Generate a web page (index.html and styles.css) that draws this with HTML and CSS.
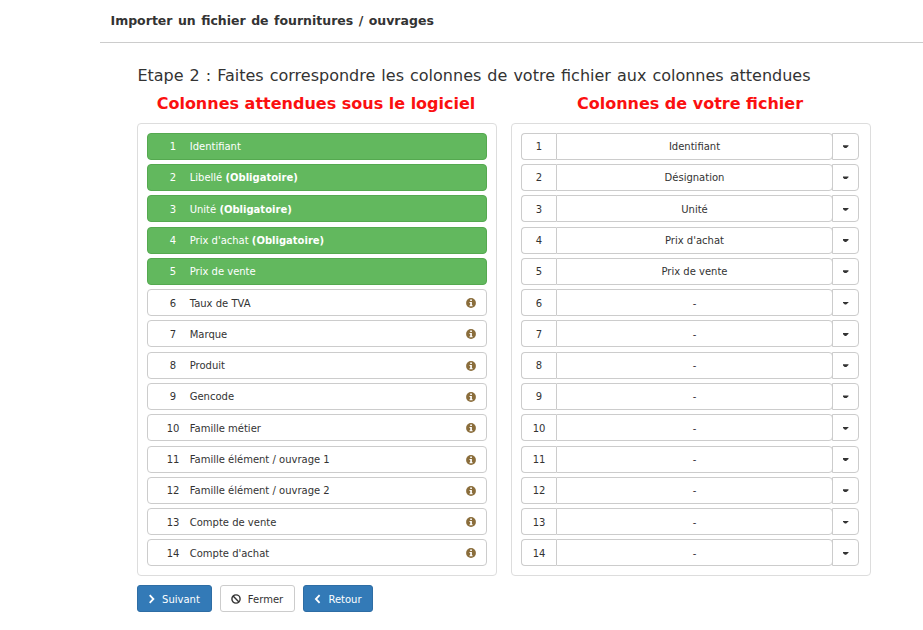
FILE: index.html
```
<!DOCTYPE html>
<html lang="fr">
<head>
<meta charset="utf-8">
<title>Importer un fichier</title>
<link rel="stylesheet" href="styles.css">
</head>
<body>
<svg class="defs"><defs>
<symbol id="info" viewBox="0 0 10 10"><circle cx="5" cy="5" r="4.9" fill="#8a6d3b"/><path d="M4.2 1.6h1.7v1.4H4.2zM3.5 4h2.4v3.2h.7v1H3.5v-1h.7V5h-.7z" fill="#fff"/></symbol>
</defs></svg>
<main class="page">
<header class="page-header"><h1>Importer un fichier de fournitures / ouvrages</h1></header>
<section class="content">
<h2>Etape 2 : Faites correspondre les colonnes de votre fichier aux colonnes attendues</h2>
<div class="columns">
<div class="column"><h3>Colonnes attendues sous le logiciel</h3>
<div class="panel expected">
<div class="row done"><span class="num">1</span><span>Identifiant</span></div>
<div class="row done"><span class="num">2</span><span>Libellé <b>(Obligatoire)</b></span></div>
<div class="row done"><span class="num">3</span><span>Unité <b>(Obligatoire)</b></span></div>
<div class="row done"><span class="num">4</span><span>Prix d'achat <b>(Obligatoire)</b></span></div>
<div class="row done"><span class="num">5</span><span>Prix de vente</span></div>
<div class="row"><span class="num">6</span><span>Taux de TVA</span><svg class="info"><use href="#info"/></svg></div>
<div class="row"><span class="num">7</span><span>Marque</span><svg class="info"><use href="#info"/></svg></div>
<div class="row"><span class="num">8</span><span>Produit</span><svg class="info"><use href="#info"/></svg></div>
<div class="row"><span class="num">9</span><span>Gencode</span><svg class="info"><use href="#info"/></svg></div>
<div class="row"><span class="num">10</span><span>Famille métier</span><svg class="info"><use href="#info"/></svg></div>
<div class="row"><span class="num">11</span><span>Famille élément / ouvrage 1</span><svg class="info"><use href="#info"/></svg></div>
<div class="row"><span class="num">12</span><span>Famille élément / ouvrage 2</span><svg class="info"><use href="#info"/></svg></div>
<div class="row"><span class="num">13</span><span>Compte de vente</span><svg class="info"><use href="#info"/></svg></div>
<div class="row"><span class="num">14</span><span>Compte d'achat</span><svg class="info"><use href="#info"/></svg></div>
</div></div>
<div class="column"><h3>Colonnes de votre fichier</h3>
<div class="panel mapping">
<div class="group"><span class="idx">1</span><span class="value">Identifiant</span><span class="toggle"><i></i></span></div>
<div class="group"><span class="idx">2</span><span class="value">Désignation</span><span class="toggle"><i></i></span></div>
<div class="group"><span class="idx">3</span><span class="value">Unité</span><span class="toggle"><i></i></span></div>
<div class="group"><span class="idx">4</span><span class="value">Prix d'achat</span><span class="toggle"><i></i></span></div>
<div class="group"><span class="idx">5</span><span class="value">Prix de vente</span><span class="toggle"><i></i></span></div>
<div class="group"><span class="idx">6</span><span class="value">-</span><span class="toggle"><i></i></span></div>
<div class="group"><span class="idx">7</span><span class="value">-</span><span class="toggle"><i></i></span></div>
<div class="group"><span class="idx">8</span><span class="value">-</span><span class="toggle"><i></i></span></div>
<div class="group"><span class="idx">9</span><span class="value">-</span><span class="toggle"><i></i></span></div>
<div class="group"><span class="idx">10</span><span class="value">-</span><span class="toggle"><i></i></span></div>
<div class="group"><span class="idx">11</span><span class="value">-</span><span class="toggle"><i></i></span></div>
<div class="group"><span class="idx">12</span><span class="value">-</span><span class="toggle"><i></i></span></div>
<div class="group"><span class="idx">13</span><span class="value">-</span><span class="toggle"><i></i></span></div>
<div class="group"><span class="idx">14</span><span class="value">-</span><span class="toggle"><i></i></span></div>
</div></div>
</div>
<div class="actions">
<button class="btn primary next"><svg viewBox="0 0 10 10"><path d="M3.7 1.2l3.7 3.8-3.7 3.8" fill="none" stroke="currentColor" stroke-width="1.8"/></svg>Suivant</button>
<button class="btn close"><svg viewBox="0 0 10 10"><circle cx="5" cy="5" r="4.1" fill="none" stroke="currentColor" stroke-width="1.4"/><path d="M2.1 2.1l5.8 5.8" stroke="currentColor" stroke-width="1.4"/></svg>Fermer</button>
<button class="btn primary back"><svg viewBox="0 0 10 10"><path d="M7.6 1.2L3.9 5l3.7 3.8" fill="none" stroke="currentColor" stroke-width="1.8"/></svg>Retour</button>
</div>
</section>
</main>
</body>
</html>
```
FILE: styles.css
```
* { box-sizing: border-box; }
body { margin: 0; background: #fff; color: #333; font-family: "DejaVu Sans", Verdana, sans-serif; font-size: 10px; height: 630px; overflow: hidden; }
.defs { display: none; }
.page { margin-left: 100px; }
.page-header { height: 43px; border-bottom: 1px solid #ccc; padding: 13px 0 0 10.5px; }
h1, h2, h3 { margin: 0; white-space: nowrap; }
h1 { font-size: 12.5px; line-height: 16px; word-spacing: 1.1px; }
.content { padding: 21px 0 0 37.4px; }
h2 { font-size: 16px; font-weight: 400; line-height: 24px; word-spacing: .95px; }
.columns { display: flex; gap: 14px; margin-left: -.4px; }
.column { width: 360px; }
h3 { font-size: 16px; line-height: 24px; text-align: center; color: #fb1010; padding: 4px 2px 0 0; height: 35px; }
.panel { height: 453px; border: 1px solid #ddd; border-radius: 4px; padding: 8.75px 9px 0; display: flex; flex-direction: column; gap: 4.282px; }
.row { height: 27px; flex: none; border: 1px solid #ccc; border-radius: 4px; display: flex; align-items: center; padding: .875px 10px 0 12px; }
.row.done { background: #62b85e; border-color: #55a950; color: #fff; }
.num { width: 26px; text-align: center; margin-right: 3.7px; }
.info { width: 10px; height: 10px; margin-left: auto; }
.mapping { padding-right: 11px; }
.group { height: 27px; flex: none; display: flex; }
.idx, .value, .toggle { display: flex; align-items: center; justify-content: center; padding-top: .875px; border: 1px solid #ccc; }
.idx { width: 35px; border-right: 0; border-radius: 4px 0 0 4px; }
.value { flex: 1; border-radius: 0 4px 4px 0; }
.toggle { width: 27px; margin-left: -1px; border-radius: 0 4px 4px 0; }
.toggle i { width: 6px; height: 3px; background: #333; clip-path: polygon(0 0, 100% 0, 100% 30%, 60% 100%, 40% 100%, 0 30%); }
.actions { display: flex; gap: 8px; margin: 9px 0 0 -.4px; }
.btn { height: 27px; width: 75px; padding: 1px 2px 0 0; font: inherit; color: #333; background: #fff; border: 1px solid #ccc; border-radius: 3px; display: flex; align-items: center; justify-content: center; gap: 6px; }
.btn svg { width: 10px; height: 10px; }
.next { padding-right: 3px; }
.close { padding-right: 1px; gap: 7px; }
.primary { background: #337ab7; border-color: #2e6da4; color: #fff; }
.back { width: 70px; }
```
